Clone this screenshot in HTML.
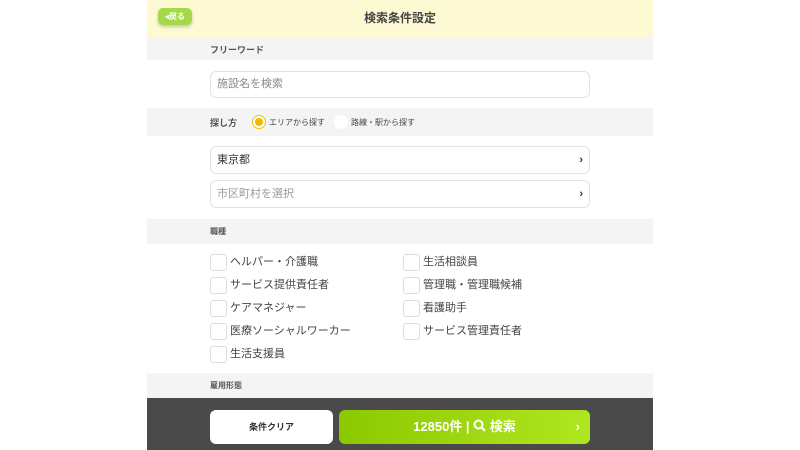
<!DOCTYPE html><html><head><meta charset="utf-8"><style>
*{box-sizing:border-box;margin:0;padding:0}
body{width:800px;height:450px;background:#fff;font-family:"Liberation Sans","Noto Sans CJK JP",sans-serif;position:relative;overflow:hidden;color:#333}
.wrap{position:absolute;left:147px;width:506px;top:0;height:450px}
.a{position:absolute;left:0;width:506px}
.g{background:#f4f4f4}
.lab{position:absolute;left:63px;font-size:9px;font-weight:bold;color:#555}
.box{position:absolute;left:63px;width:380px;border:1px solid #e2e2e2;border-radius:6px;background:#fff;font-size:11px;padding-left:6px}
.cb{position:absolute;font-size:11px;color:#444;padding-left:20px;line-height:16px}
.cb:before{content:"";position:absolute;left:0;top:0;width:15px;height:15px;border:1px solid #ddd;border-radius:3px;background:#fff}
.chev{position:absolute;right:6px;top:0;font-weight:bold;font-size:11px;color:#333}
</style></head><body>
<div class="wrap">
<div class="a" style="top:0;height:37px;background:#fdf9d2"></div>
<div style="position:absolute;left:11px;top:8px;width:34px;height:17px;background:#a5d94a;border-radius:5px;box-shadow:0 2px 3px rgba(0,0,0,.2);color:#fff;font-size:8px;font-weight:bold;line-height:17px;text-align:center">◂戻る</div>
<div style="position:absolute;left:0;width:506px;top:9px;text-align:center;font-size:12px;font-weight:bold;color:#444">検索条件設定</div>
<div class="a g" style="top:37px;height:23px"></div>
<div class="lab" style="top:43px">フリーワード</div>
<div class="box" style="top:71px;height:27px;line-height:25px;color:#888">施設名を検索</div>
<div class="a g" style="top:108px;height:28px"></div>
<div class="lab" style="top:116px">探し方</div>
<div style="position:absolute;left:105px;top:115px;width:14px;height:14px;border-radius:50%;background:#fff;border:1px solid #f0c000"><div style="margin:2px;width:8px;height:8px;border-radius:50%;background:#f0b800"></div></div>
<div style="position:absolute;left:122px;top:117px;font-size:8px;color:#444">エリアから探す</div>
<div style="position:absolute;left:187px;top:115px;width:14px;height:14px;border-radius:50%;background:#fff"></div>
<div style="position:absolute;left:204px;top:117px;font-size:8px;color:#444">路線・駅から探す</div>
<div class="box" style="top:146px;height:28px;line-height:26px;color:#333">東京都<span class="chev">›</span></div>
<div class="box" style="top:180px;height:28px;line-height:26px;color:#999">市区町村を選択<span class="chev">›</span></div>
<div class="a g" style="top:219px;height:25px"></div>
<div class="lab" style="top:226px;font-size:8px">職種</div>
<div class="cb" style="left:63px;top:254px">ヘルパー・介護職</div>
<div class="cb" style="left:63px;top:277px">サービス提供責任者</div>
<div class="cb" style="left:63px;top:300px">ケアマネジャー</div>
<div class="cb" style="left:63px;top:323px">医療ソーシャルワーカー</div>
<div class="cb" style="left:63px;top:346px">生活支援員</div>
<div class="cb" style="left:256px;top:254px">生活相談員</div>
<div class="cb" style="left:256px;top:277px">管理職・管理職候補</div>
<div class="cb" style="left:256px;top:300px">看護助手</div>
<div class="cb" style="left:256px;top:323px">サービス管理責任者</div>
<div class="a g" style="top:373px;height:25px"></div>
<div class="lab" style="top:380px;font-size:8px">雇用形態</div>
<div class="a" style="top:398px;height:52px;background:#4a4a4a"></div>
<div style="position:absolute;left:63px;top:410px;width:123px;height:34px;background:#fff;border-radius:6px;font-size:9px;font-weight:bold;text-align:center;line-height:34px">条件クリア</div>
<div style="position:absolute;left:192px;top:410px;width:251px;height:34px;background:linear-gradient(90deg,#8cc800,#b0e620);border-radius:6px;color:#fff;font-size:13px;font-weight:bold;text-align:center;line-height:34px">12850件 | <svg width="13" height="13" viewBox="0 0 13 13" style="vertical-align:-1px"><circle cx="5.5" cy="5.5" r="4" fill="none" stroke="#fff" stroke-width="2"/><path d="M8.5 8.5l3.5 3.5" stroke="#fff" stroke-width="2.2"/></svg> 検索<span style="position:absolute;right:10px;top:0">›</span></div>
</div>
</body></html>
